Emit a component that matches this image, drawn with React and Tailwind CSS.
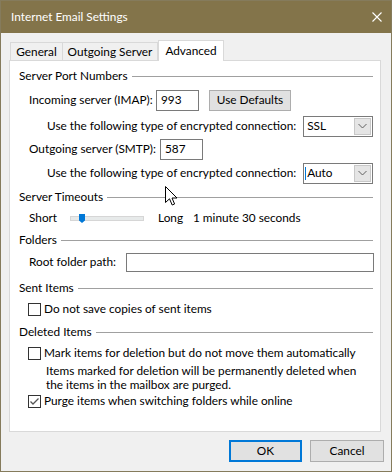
import React from 'react';

const Section = ({ title, className = '' }) => (
  <div className={`flex items-center h-[16px] ${className}`}>
    <span>{title}</span>
    <div className="flex-1 h-px bg-[#a0a0a0] ml-[4px]" />
  </div>
);

const Checkbox = ({ checked }) => (
  <div className="w-[13px] h-[13px] border border-[#333333] bg-white flex items-center justify-center shrink-0">
    {checked && (
      <svg width="11" height="11" viewBox="0 0 11 11">
        <path d="M1.5 5.5 L4 8 L9.5 2.5" fill="none" stroke="#555555" strokeWidth="1.3" />
      </svg>
    )}
  </div>
);

const Select = ({ value, caret }) => (
  <div className="w-[70px] h-[21px] border border-[#7a7a7a] bg-white flex items-center pl-[3px] pr-[1px] relative">
    {caret && <div className="absolute left-[1px] top-[3px] w-px h-[13px] bg-[#0078d7]" />}
    <span className="flex-1">{value}</span>
    <div className="w-[17px] h-[17px] bg-[#e5e5e5] border border-[#c8c8c8] flex items-center justify-center">
      <svg width="9" height="6" viewBox="0 0 9 6">
        <path d="M0.5 1 L4.5 5 L8.5 1" fill="none" stroke="#606060" strokeWidth="1" />
      </svg>
    </div>
  </div>
);

const Cursor = () => (
  <svg className="absolute left-[164px] top-[185px]" width="13" height="21" viewBox="0 0 13 21">
    <path d="M0.5 0.5 L0.5 16.5 L4.5 12.8 L7.2 19 L9.6 18 L7 12 L12 12 Z" fill="white" stroke="black" strokeWidth="1" strokeLinejoin="miter" />
  </svg>
);

export default function App() {
  return (
    <div className="relative w-[392px] h-[472px] flex flex-col border border-[#857b5c] text-[11.8px] leading-[16px] text-black whitespace-nowrap font-['Lato',sans-serif]">
      {/* title bar */}
      <div className="h-[32px] bg-[#83744a] flex items-center justify-between pl-[10px] pr-[9px] text-white">
        <span>Internet Email Settings</span>
        <svg width="10" height="10" viewBox="0 0 10 10">
          <path d="M0.5 0.5 L9.5 9.5 M9.5 0.5 L0.5 9.5" stroke="white" strokeWidth="1.1" />
        </svg>
      </div>

      <div className="flex-1 bg-[#f0f0f0] pt-[7px]">
        {/* tabs */}
        <div className="flex items-end h-[20px] ml-[9px]">
          <div className="w-[53px] h-[18px] border border-b-0 border-[#d9d9d9] flex items-center justify-center">General</div>
          <div className="w-[95px] h-[18px] border-t border-r border-[#d9d9d9] flex items-center justify-center">Outgoing Server</div>
          <div className="w-[66px] h-[21px] -mb-px relative z-10 bg-white border border-b-0 border-[#d9d9d9] flex items-center justify-center">Advanced</div>
        </div>

        {/* panel */}
        <div className="ml-[8px] w-[372px] h-[372px] bg-white border border-[#d9d9d9] pl-[9px] pr-[7px] flex flex-col">
          <Section title="Server Port Numbers" className="mt-[7px]" />

          <div className="mt-[5px] h-[22px] flex items-center pl-[10px]">
            <span className="w-[127px]">Incoming server (IMAP):</span>
            <div className="w-[43px] h-[21px] border border-[#7a7a7a] flex items-center pl-[4px]">993</div>
            <div className="ml-[10px] w-[82px] h-[21px] bg-[#e1e1e1] border border-[#adadad] flex items-center justify-center">Use Defaults</div>
          </div>

          <div className="mt-[4px] h-[22px] flex items-center pl-[28px]">
            <span className="w-[257px]">Use the following type of encrypted connection:</span>
            <Select value="SSL" />
          </div>

          <div className="mt-[1px] h-[22px] flex items-center pl-[10px]">
            <span className="w-[131px]">Outgoing server (SMTP):</span>
            <div className="w-[43px] h-[21px] border border-[#7a7a7a] flex items-center pl-[4px]">587</div>
          </div>

          <div className="mt-[2px] h-[22px] flex items-center pl-[28px]">
            <span className="w-[257px]">Use the following type of encrypted connection:</span>
            <Select value="Auto" caret />
          </div>

          <Section title="Server Timeouts" className="mt-[5px]" />

          <div className="mt-[5px] h-[16px] flex items-center pl-[10px]">
            <span className="w-[41px]">Short</span>
            <div className="w-[74px] h-[5px] bg-[#e7eaea] border border-[#d6d6d6] relative">
              <svg className="absolute left-[8px] -top-[3px]" width="6" height="9" viewBox="0 0 6 9">
                <path d="M0 0 H6 V6.5 L3 9 L0 6.5 Z" fill="#0078d7" />
              </svg>
            </div>
            <span className="ml-[14px] w-[35px]">Long</span>
            <span>1 minute 30 seconds</span>
          </div>

          <Section title="Folders" className="mt-[6px]" />

          <div className="mt-[4px] h-[20px] flex items-center pl-[10px]">
            <span className="w-[97px]">Root folder path:</span>
            <div className="flex-1 -mr-px h-[19px] border border-[#7a7a7a]" />
          </div>

          <Section title="Sent Items" className="mt-[8px]" />

          <div className="mt-[5px] h-[16px] flex items-center pl-[9px] gap-[3px]">
            <Checkbox />
            <span>Do not save copies of sent items</span>
          </div>

          <Section title="Deleted Items" className="mt-[7px]" />

          <div className="mt-[5px] h-[16px] flex items-center pl-[9px] gap-[3px]">
            <Checkbox />
            <span>Mark items for deletion but do not move them automatically</span>
          </div>

          <div className="mt-[3px] pl-[27px] leading-[14px]">
            Items marked for deletion will be permanently deleted when
            <br />
            the items in the mailbox are purged.
          </div>

          <div className="mt-[1px] h-[16px] flex items-center pl-[9px] gap-[3px]">
            <Checkbox checked />
            <span>Purge items when switching folders while online</span>
          </div>
        </div>

        {/* buttons */}
        <div className="mt-[8px] flex justify-end gap-[8px] pr-[7px]">
          <div className="w-[73px] h-[22px] bg-[#e1e1e1] border-2 border-[#0078d7] flex items-center justify-center">OK</div>
          <div className="w-[74px] h-[22px] bg-[#e1e1e1] border border-[#adadad] flex items-center justify-center">Cancel</div>
        </div>
      </div>

      <Cursor />
    </div>
  );
}
